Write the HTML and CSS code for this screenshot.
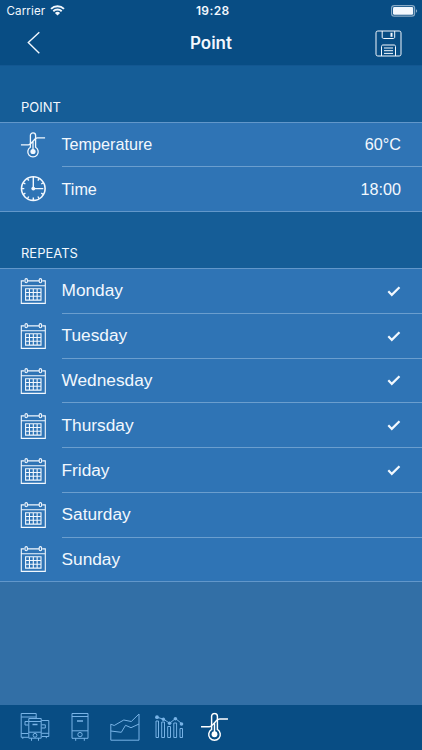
FILE: index.html
```html
<!DOCTYPE html>
<html lang="en">
<head>
<meta charset="utf-8">
<title>Point</title>
<link rel="stylesheet" href="styles.css">
</head>
<body>
<svg class="defs" aria-hidden="true">
  <symbol id="calendar" viewBox="-.3 .8 26 26">
    <path d="M4 3.700H1v22.500h24V3.700h-3M7.200 3.700h11.600M1 8.500h24"/>
    <rect x="4.700" y="1.400" width="2.400" height="4.200" rx="1.200"/><rect x="18.900" y="1.400" width="2.400" height="4.200" rx="1.200"/>
    <path d="M5.300 11.500h15.400v11.400H5.300zM9.150 11.500v11.400M13 11.500v11.400M16.850 11.500v11.400M5.300 15.300h15.400M5.300 19.100h15.400"/>
  </symbol>
  <symbol id="thermo" viewBox="0 .5 26 28">
    <path d="M10.200 16.900V4.200a2.800 2.800 0 0 1 5.600 0v12.700a5.600 5.600 0 1 1-5.600 0z"/>
    <path d="M0 14.300h8c1.500 0 2.500-1 4-2.800l3.200-3.400c.8-.8 1.500-1.300 2.800-1.300h8M13 11v9"/>
    <circle cx="13" cy="21.500" r="2.800" fill="currentColor" stroke="none"/>
  </symbol>
  <symbol id="check" viewBox="0 0 14 12"><path d="M1.300 6.300l3.500 3.600 7.700-7.700" stroke-width="2.200"/></symbol>
</svg>
<div class="screen">
  <header class="top">
    <div class="status">
      <div class="carrier">Carrier
        <svg class="wifi" viewBox="0 0 15 11"><path d="M1 3.900a9.400 9.400 0 0 1 13 0M3.300 6.200a6.100 6.100 0 0 1 8.400 0" stroke-width="1.900"/><path d="M4.900 7.900a3.800 3.800 0 0 1 5.200 0L7.500 10.600z" fill="currentColor" stroke="none"/></svg>
      </div>
      <div class="clock">19:28</div>
      <svg class="battery" viewBox="0 0 27 12"><rect x=".6" y=".6" width="23" height="10.600" rx="2.700" opacity=".55"/><rect x="2" y="2" width="20.200" height="7.800" rx="1.400" fill="currentColor" stroke="none"/><path d="M25 4.200c1.500.5 1.500 3 0 3.500z" fill="currentColor" stroke="none" opacity=".55"/></svg>
    </div>
    <nav class="bar">
      <svg class="back" viewBox="0 0 14 24"><path d="M12.300 1.200L1.300 11.500l11 10.700" stroke-width="1.400"/></svg>
      <h1>Point</h1>
      <svg class="save" viewBox="0 0 27 27"><rect x="1" y="1" width="25" height="25" rx="1.800"/><path d="M7.200 1v6c0 1 .5 1.500 1.500 1.500h9.500c1 0 1.500-.5 1.500-1.500V1M6.500 26V16.500c0-1 .6-1.500 1.500-1.500h11c1 0 1.500.5 1.500 1.500V26M9 18h9M9 20.700h9M9 23.400h9"/><rect x="16" y="3.300" width="1" height="3"/></svg>
    </nav>
  </header>
  <main>
    <h2>POINT</h2>
    <ul class="group settings">
      <li><svg class="icon thermo"><use href="#thermo"/></svg><div class="cell"><span>Temperature</span><span class="value">60°C</span></div></li>
      <li><svg class="icon" viewBox="-.3 1.400 26 26"><circle cx="13" cy="14" r="11.800" stroke-width="1.600"/><path d="M13 4v10h10M13 2v3M13 23v3M1 14h3M7 3.600l1.400 2.500M19 3.600l-1.400 2.500M2.600 8l2.500 1.400M23.400 8l-2.500 1.400M2.600 20l2.500-1.400M23.400 20l-2.500-1.400M7 24.400l1.400-2.500M19 24.400l-1.400-2.500" stroke-width="1.400"/><circle cx="13" cy="14" r="1.900" fill="currentColor" stroke="none"/></svg><div class="cell"><span>Time</span><span class="value">18:00</span></div></li>
    </ul>
    <h2>REPEATS</h2>
    <ul class="group days">
      <li><svg class="icon"><use href="#calendar"/></svg><div class="cell"><span>Monday</span><svg class="check"><use href="#check"/></svg></div></li>
      <li><svg class="icon"><use href="#calendar"/></svg><div class="cell"><span>Tuesday</span><svg class="check"><use href="#check"/></svg></div></li>
      <li><svg class="icon"><use href="#calendar"/></svg><div class="cell"><span>Wednesday</span><svg class="check"><use href="#check"/></svg></div></li>
      <li><svg class="icon"><use href="#calendar"/></svg><div class="cell"><span>Thursday</span><svg class="check"><use href="#check"/></svg></div></li>
      <li><svg class="icon"><use href="#calendar"/></svg><div class="cell"><span>Friday</span><svg class="check"><use href="#check"/></svg></div></li>
      <li><svg class="icon"><use href="#calendar"/></svg><div class="cell"><span>Saturday</span></div></li>
      <li><svg class="icon"><use href="#calendar"/></svg><div class="cell"><span>Sunday</span></div></li>
    </ul>
  </main>
  <footer class="tabs">
    <svg viewBox="0 0 30 30"><path d="M8.500 25.300H1.200V1.500h15v5M1.200 5h15M1.200 21.500h7M8.500 9.500H5v3.500h3.500M2.800 25.300v1.500M21.500 8.500h7.300v16h-7M21.500 21.300h7.300M21.500 12.800h3.800v3.200h-3.800M26.300 24.500v1.700"/><path d="M8.800 6.500h12.400v19.700H8.800zM8.800 9.500h12.400M8.800 20.200h12.400M11.500 26.200v2.600M18.500 26.200v2.600"/><path d="M12.500 12.500h5" stroke-width="1.500"/><circle cx="15" cy="23.300" r="1.900"/></svg>
    <svg viewBox="0 0 30 30"><path d="M7 1.500h16v24.800H7zM7 4.500h16M7 18.800h16M10.700 26.300v2.500M19.300 26.300v2.500"/><path d="M12 9h6" stroke-width="1.500"/><circle cx="15" cy="22.600" r="2.200"/></svg>
    <svg viewBox="0 0 30 30"><path d="M.8 12.200l3.400 1.300L13.800 8l7.500 1.500L29 2v26.200H.8z"/><path d="M.8 19l10.500 1.300 4.200-7 5.500 2.400L29 12"/></svg>
    <svg viewBox="0 0 30 30"><path d="M1 9h2.500v16.500H1zM6.700 10h2.800v15.500H6.700zM12.700 14.500h2.800v11h-2.800zM18.800 11h2.800v14.500h-2.800zM25 16.500h2.500v9H25zM2 5.200l6.400 2 6.300 4 5.800-4.700 6 5"/><g fill="currentColor" stroke="none"><circle cx="2" cy="5.200" r="1.900"/><circle cx="8.400" cy="7.200" r="1.700"/><circle cx="14.600" cy="11.200" r="1.800"/><circle cx="20.400" cy="6.700" r="1.800"/><circle cx="26.500" cy="12" r="1.800"/></g></svg>
    <svg class="active" viewBox="0 0 30 30"><use href="#thermo" x=".5" y=".5" width="28" height="29"/></svg>
  </footer>
</div>
</body>
</html>
```
FILE: styles.css
```css
* { box-sizing: border-box; }
body { margin: 0; color: #f2f8fe; font-family: "Liberation Sans", Arial, sans-serif; }
svg { display: block; flex: none; fill: none; stroke: currentColor; stroke-width: 1.2; }
.defs { position: absolute; width: 0; height: 0; }
.screen { display: flex; flex-direction: column; width: 422px; height: 750px; background: #326fa6; overflow: hidden; }
.top { height: 66px; background: #084d84; border-bottom: 1px solid #135791; }
.status { display: grid; grid-template-columns: 1fr auto 1fr; align-items: center; height: 21px; padding: 0 5px 0 6.500px; font-family: Inter, sans-serif; font-size: 11.600px; }
.carrier { display: flex; align-items: center; gap: 5px; letter-spacing: .1px; }
.wifi { width: 15px; height: 11px; }
.clock { margin-left: 2px; font-weight: 600; font-size: 12px; letter-spacing: .4px; }
.battery { width: 27px; height: 12px; justify-self: end; margin-right: -1px; }
.bar { display: grid; grid-template-columns: 1fr auto 1fr; align-items: center; height: 44px; padding: 0 20px 0 27px; }
.back { width: 14px; height: 24px; }
h1 { margin: -1px 0 0 -7px; font: 600 17px/22px Inter, sans-serif; }
.save { width: 27px; height: 27px; justify-self: end; stroke-width: 1; }
main { flex: 1; }
h2 { display: flex; align-items: flex-end; height: 56px; margin: 0; padding: 0 21px 6px; background: #155d97; font: 400 13px/17px Inter, sans-serif; }
.group { margin: 0; padding: 0; list-style: none; background: #2f74b5; border-top: 1px solid #6297ca; border-bottom: 1px solid #6297ca; }
li { display: flex; align-items: center; padding-left: 20px; }
.settings li { height: 44px; }
.days li { height: 44.800px; }
.days li:last-child { height: 43.200px; }
.icon { width: 26px; height: 26px; margin-right: 15.500px; }
.cell { display: flex; flex: 1; align-items: center; justify-content: space-between; height: 100%; padding-right: 21px; border-bottom: 1px solid #6b9ece; font-size: 17.300px; }
.settings .cell { font-size: 16.200px; }
li:last-child .cell { border-bottom: 0; }
.check { width: 14px; height: 12px; }
.days .icon { stroke-width: 1.100; }
.thermo { stroke-width: 1.400; }
.tabs { display: flex; gap: 15px; height: 45px; padding: 7px 20px 0; background: #084d84; color: #78b3e6; }
.tabs svg { width: 30px; height: 30px; stroke-width: 1; }
.tabs .active { margin-left: -.5px; color: #fff; stroke-width: 1.400; }
```
